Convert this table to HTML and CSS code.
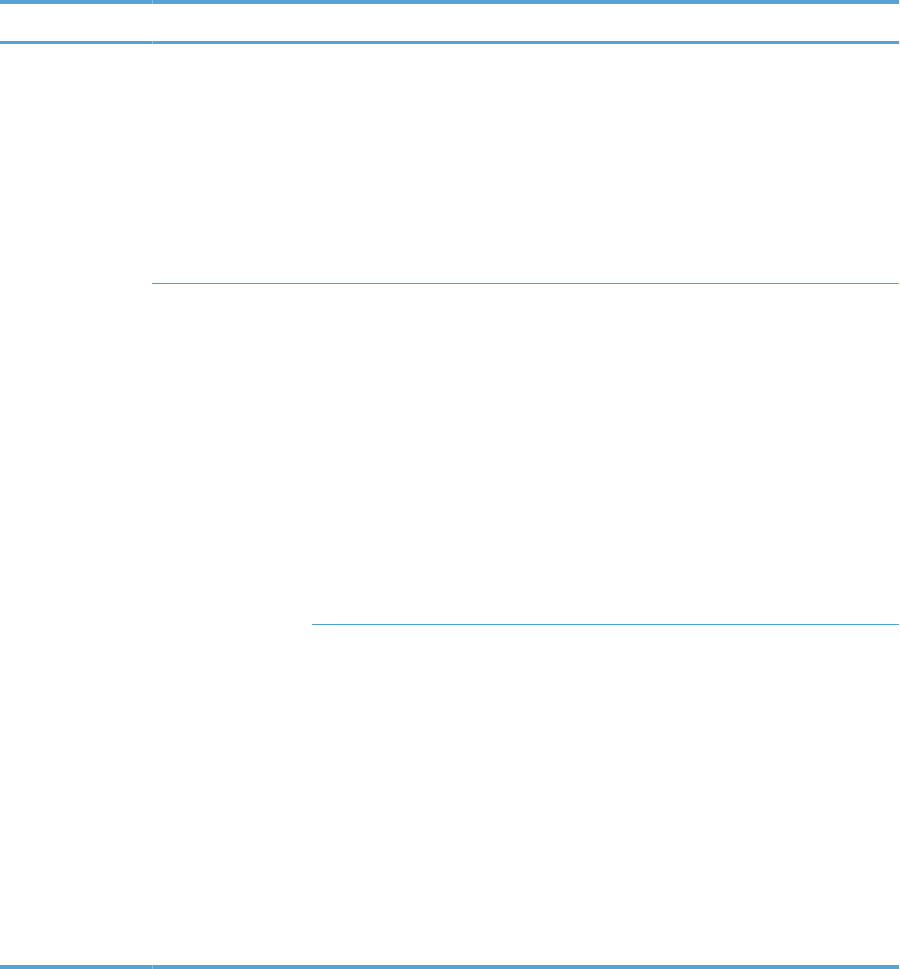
FILE: index.html
```html
<!DOCTYPE html>
<html>
<head>
<meta charset="utf-8">
<link rel="stylesheet" href="styles.css">
</head>
<body>
<div class="table">
  <div class="bar bar-top"></div>
  <div class="row head">
    <div class="c1"></div>
    <div class="c2"></div>
  </div>
  <div class="bar bar-head"></div>
  <div class="row r1">
    <div class="c1"></div>
    <div class="c2 ruled-grey"></div>
  </div>
  <div class="row r2">
    <div class="c1"></div>
    <div class="c2 nested">
      <div class="subrow s1">
        <div class="sc1"></div>
        <div class="sc2 ruled-blue"></div>
      </div>
      <div class="subrow s2">
        <div class="sc1"></div>
        <div class="sc2"></div>
      </div>
    </div>
  </div>
  <div class="bar bar-bottom"></div>
</div>
</body>
</html>
```

FILE: styles.css
```css
html, body {
  margin: 0;
  padding: 0;
  background: #ffffff;
  font-family: "Liberation Sans", Arial, sans-serif;
}

.table {
  width: 899px;
  display: flex;
  flex-direction: column;
}

.bar {
  background: linear-gradient(to right, #58a3d6 0, #58a3d6 152px, #86bde3 152px, #86bde3 153px, #58a3d6 153px);
}

.bar-top { height: 4px; }
.bar-head { height: 3px; }
.bar-bottom { height: 4px; }

.row {
  display: grid;
  grid-template-columns: 152px 1fr;
}

.head { height: 37px; }

.r1 { height: 240px; }
.ruled-grey { border-bottom: 1px solid #6b9cc8; }

.r2 { height: 681px; }

.nested {
  display: flex;
  flex-direction: column;
}

.subrow {
  display: grid;
  grid-template-columns: 160px 1fr;
}

.s1 { height: 341px; }
.s2 { flex: 1; }

.ruled-blue { border-bottom: 1px solid #4fa0d8; }
```
